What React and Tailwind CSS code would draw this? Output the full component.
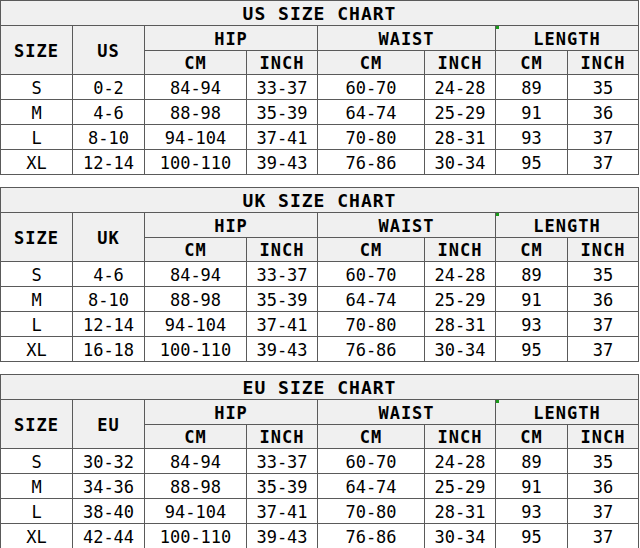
const charts = [
  {
    title: 'US SIZE CHART',
    label: 'US',
    rows: [
      ['S', '0-2', '84-94', '33-37', '60-70', '24-28', '89', '35'],
      ['M', '4-6', '88-98', '35-39', '64-74', '25-29', '91', '36'],
      ['L', '8-10', '94-104', '37-41', '70-80', '28-31', '93', '37'],
      ['XL', '12-14', '100-110', '39-43', '76-86', '30-34', '95', '37'],
    ],
  },
  {
    title: 'UK SIZE CHART',
    label: 'UK',
    rows: [
      ['S', '4-6', '84-94', '33-37', '60-70', '24-28', '89', '35'],
      ['M', '8-10', '88-98', '35-39', '64-74', '25-29', '91', '36'],
      ['L', '12-14', '94-104', '37-41', '70-80', '28-31', '93', '37'],
      ['XL', '16-18', '100-110', '39-43', '76-86', '30-34', '95', '37'],
    ],
  },
  {
    title: 'EU SIZE CHART',
    label: 'EU',
    rows: [
      ['S', '30-32', '84-94', '33-37', '60-70', '24-28', '89', '35'],
      ['M', '34-36', '88-98', '35-39', '64-74', '25-29', '91', '36'],
      ['L', '38-40', '94-104', '37-41', '70-80', '28-31', '93', '37'],
      ['XL', '42-44', '100-110', '39-43', '76-86', '30-34', '95', '37'],
    ],
  },
]

const widths = [72, 72, 102, 71, 107, 71, 72, 71]

const head = 'border border-[#5a5a5a] bg-[#f0f0f0] p-0 pt-[2px] text-center align-middle font-bold tracking-[1px]'
const cell = 'border border-[#5a5a5a] bg-white p-0 pt-[3px] text-center align-middle'

function SizeTable({ chart }) {
  return (
    <table className="w-[639px] table-fixed border-collapse border border-[#444] text-[17px] leading-none text-black">
      <colgroup>
        {widths.map((w, i) => (
          <col key={i} style={{ width: w }} />
        ))}
      </colgroup>
      <tbody>
        <tr className="h-[25px]">
          <td colSpan={8} className={head + ' text-[18px] tracking-[1.5px]'}>
            {chart.title}
          </td>
        </tr>
        <tr className="h-[25px]">
          <td rowSpan={2} className={head}>SIZE</td>
          <td rowSpan={2} className={head}>{chart.label}</td>
          <td colSpan={2} className={head}>HIP</td>
          <td colSpan={2} className={head}>WAIST</td>
          <td colSpan={2} className={head + ' relative'}>
            <span className="absolute left-0 top-0 h-0 w-0 border-l-[3px] border-t-[3px] border-l-[#1a9a1a] border-t-[#1a9a1a]" />
            LENGTH
          </td>
        </tr>
        <tr className="h-[24px]">
          <td className={head}>CM</td>
          <td className={head}>INCH</td>
          <td className={head}>CM</td>
          <td className={head}>INCH</td>
          <td className={head}>CM</td>
          <td className={head}>INCH</td>
        </tr>
        {chart.rows.map((r) => (
          <tr key={r[0]} className="h-[25px]">
            {r.map((v, i) => (
              <td key={i} className={cell}>{v}</td>
            ))}
          </tr>
        ))}
      </tbody>
    </table>
  )
}

export default function App() {
  return (
    <div
      className="flex h-[548px] w-[640px] flex-col gap-[12px] overflow-hidden bg-white"
      style={{ fontFamily: '"DejaVu Sans Mono", monospace' }}
    >
      {charts.map((c) => (
        <SizeTable key={c.label} chart={c} />
      ))}
    </div>
  )
}
